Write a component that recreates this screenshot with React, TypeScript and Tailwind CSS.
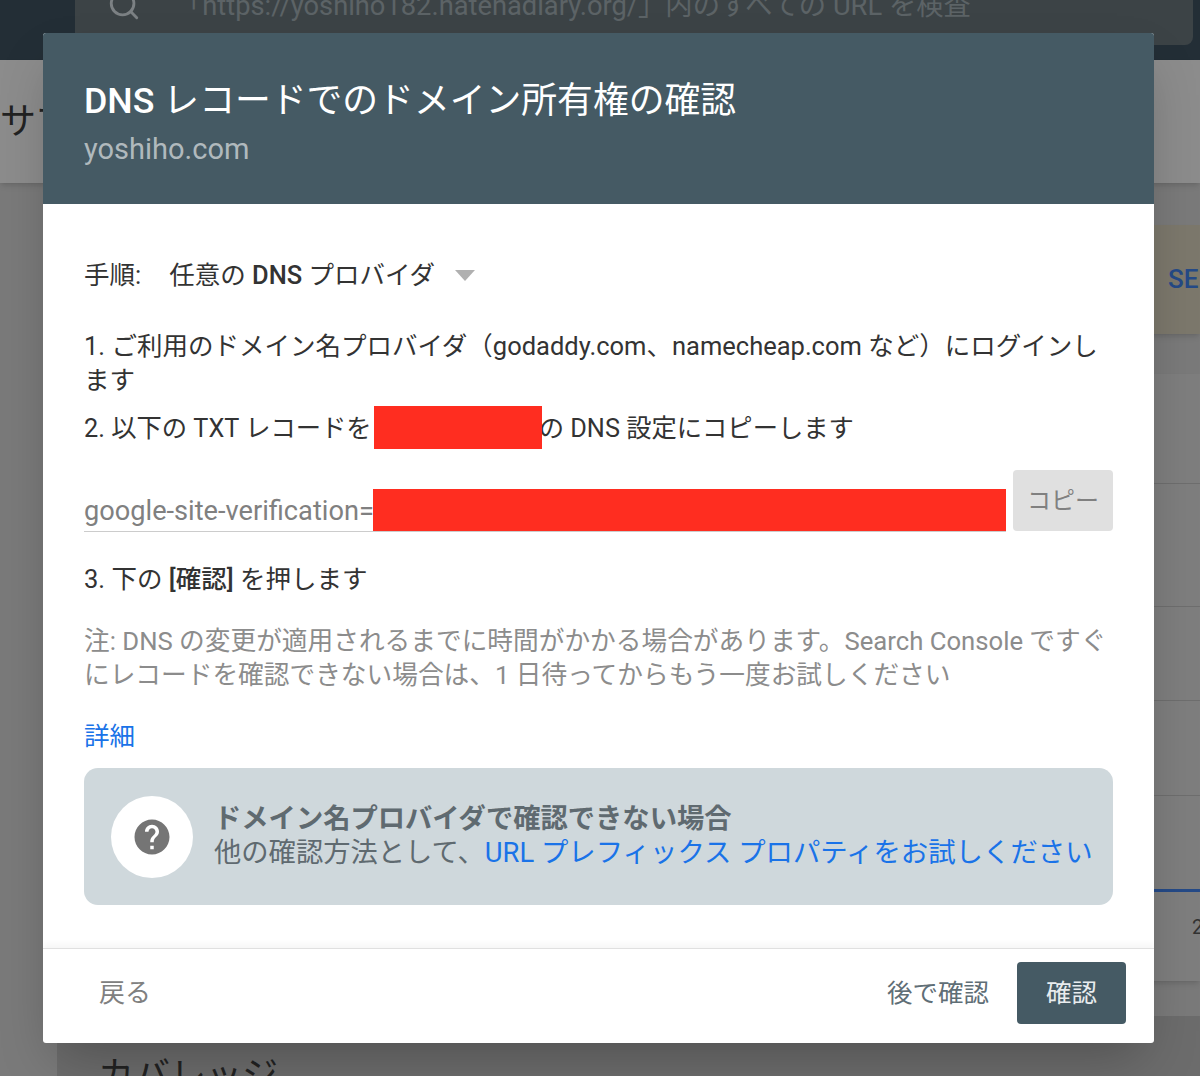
import { Search } from 'lucide-react';

const font = { fontFamily: 'Roboto, "Noto Sans CJK JP", sans-serif' };

export default function App() {
  return (
    <div className="relative h-[1076px] w-[1200px] overflow-hidden bg-[#7a7a7a]" style={font}>
      {/* Dimmed page behind the dialog */}
      <div className="flex h-[60px] bg-[#232e36] pl-[75px] pr-[7px]">
        <div className="mt-[-20px] flex h-[65px] w-full items-start gap-[34px] rounded-b-lg bg-[#3c4346] pl-[32px] text-[27.3px] leading-[34px] text-[#5c6366]">
          <Search className="mt-[8px] h-[34px] w-[34px] shrink-0 text-[#7c8184]" />
          <span className="mt-[9px] whitespace-nowrap">「https://yoshiho182.hatenadiary.org/」内のすべての URL を検査</span>
        </div>
      </div>
      <div className="flex h-[123px] items-center bg-[#8c8c8c] shadow-md">
        <span className="text-[36px] text-[#222]">サマリー</span>
      </div>
      <div className="flex justify-end pt-[42px]">
        <div className="flex h-[109px] w-[60px] items-center overflow-hidden bg-[#7c786c] pl-[28px] shadow-md">
          <span className="whitespace-nowrap text-[26px] font-medium text-[#254a87]">SEE</span>
        </div>
      </div>
      <div className="mt-[40px] flex justify-end">
        <div className="h-[607px] w-[60px] bg-[#7e7e7e] shadow-md">
          <div className="h-[110px] border-b border-[#6e6e6e]" />
          <div className="h-[123px] border-b border-[#6e6e6e]" />
          <div className="h-[94px] border-b border-[#6e6e6e]" />
          <div className="h-[95px] border-b border-[#6e6e6e]" />
          <div className="h-[96px] border-b-[3px] border-[#254a87]" />
          <div className="pl-[52px] pt-[20px] text-[20px] text-[#333]">2</div>
        </div>
      </div>
      <div className="absolute bottom-0 left-[57px] h-[60px] w-full bg-[#6c6c6c] pl-[41px] pt-[36px] text-[36px] leading-[48px] text-[#222]">カバレッジ</div>

      {/* Dialog */}
      <div className="absolute left-[43px] top-[33px] flex h-[1010px] w-[1111px] flex-col overflow-hidden rounded-[3px] bg-white shadow-2xl">
        <div className="h-[171px] bg-[#455a64] pl-[41px] pt-[44px]">
          <h1 className="text-[35.8px] leading-[48px] text-white"><span className="font-medium">DNS</span> レコードでのドメイン所有権の確認</h1>
          <p className="mt-[4px] text-[29px] leading-[40px] text-[#b0b9bd]">yoshiho.com</p>
        </div>
        <div className="flex-1 px-[41px] pt-[54px] text-[25.5px] leading-[34px] text-[#333]">
          <div className="flex items-center">
            <span>手順:</span>
            <span className="ml-[28px]">任意の <b className="font-medium">DNS</b> プロバイダ</span>
            <span className="ml-[20px] h-0 w-0 border-x-[10px] border-t-[11px] border-x-transparent border-t-[#b0b0b0]" />
          </div>
          <p className="mt-[37px]">1. ご利用のドメイン名プロバイダ（godaddy.com、namecheap.com など）にログインします</p>
          <p className="mt-[15px] flex items-center text-[25.3px]">
            2. 以下の TXT レコードを
            <span className="relative z-10 mb-[-3px] ml-[2px] mr-[-3px] mt-[-7px] h-[43px] w-[168px] bg-[#ff2d20]" />
            の DNS 設定にコピーします
          </p>
          <div className="mt-[24px] flex items-start">
            <div className="flex w-[922px] items-center border-b border-[#ccc] pt-[19px]">
              <span className="mb-[-1px] mt-[1px] text-[27.2px] leading-[41px] text-[#808080]">google-site-verification=</span>
              <span className="ml-[-1px] h-[42px] flex-1 bg-[#ff2d20]" />
            </div>
            <button className="ml-[7px] h-[61px] w-[100px] rounded-[4px] bg-[#e0e0e0] text-[24px] text-[#808080]">コピー</button>
          </div>
          <p className="mt-[30px]">3. 下の <b className="font-medium">[確認]</b> を押します</p>
          <p className="mt-[28px] text-[25.7px] text-[#8c8c8c]">注: DNS の変更が適用されるまでに時間がかかる場合があります。Search Console ですぐにレコードを確認できない場合は、1 日待ってからもう一度お試しください</p>
          <a className="mt-[27px] block text-[#1a73e8]">詳細</a>
          <div className="mt-[15px] flex h-[137px] items-center rounded-[14px] bg-[#cfd8dc] pl-[27px]">
            <div className="flex h-[82px] w-[82px] items-center justify-center rounded-full bg-white">
              <svg viewBox="0 0 24 24" className="h-[42px] w-[42px] fill-[#757575]">
                <path d="M12 2C6.48 2 2 6.48 2 12s4.48 10 10 10 10-4.48 10-10S17.52 2 12 2zm1 17h-2v-2h2v2zm2.07-7.75l-.9.92C13.45 12.9 13 13.5 13 15h-2v-.5c0-1.1.45-2.1 1.17-2.83l1.24-1.26c.37-.36.59-.86.59-1.41 0-1.1-.9-2-2-2s-2 .9-2 2H8c0-2.21 1.79-4 4-4s4 1.79 4 4c0 .88-.36 1.68-.93 2.25z" />
              </svg>
            </div>
            <div className="mb-[2px] ml-[21px] text-[27.3px] leading-[34px] text-[#5f6a70]">
              <p className="font-bold">ドメイン名プロバイダで確認できない場合</p>
              <p>他の確認方法として、<a className="text-[27.4px] text-[#1a73e8]">URL プレフィックス プロパティをお試しください</a></p>
            </div>
          </div>
        </div>
        <div className="flex h-[95px] items-center justify-between border-t border-[#e0e0e0] pb-[6px] pl-[56px] pr-[28px] shadow-[0_-4px_6px_rgba(0,0,0,0.04)]">
          <button className="text-[26px] text-[#808080]">戻る</button>
          <div className="flex items-center">
            <button className="text-[25.5px] text-[#5f6e76]">後で確認</button>
            <button className="ml-[28px] h-[62px] w-[109px] rounded-[4px] bg-[#455a64] text-[25.5px] text-[#e8ecee]">確認</button>
          </div>
        </div>
      </div>
    </div>
  );
}
